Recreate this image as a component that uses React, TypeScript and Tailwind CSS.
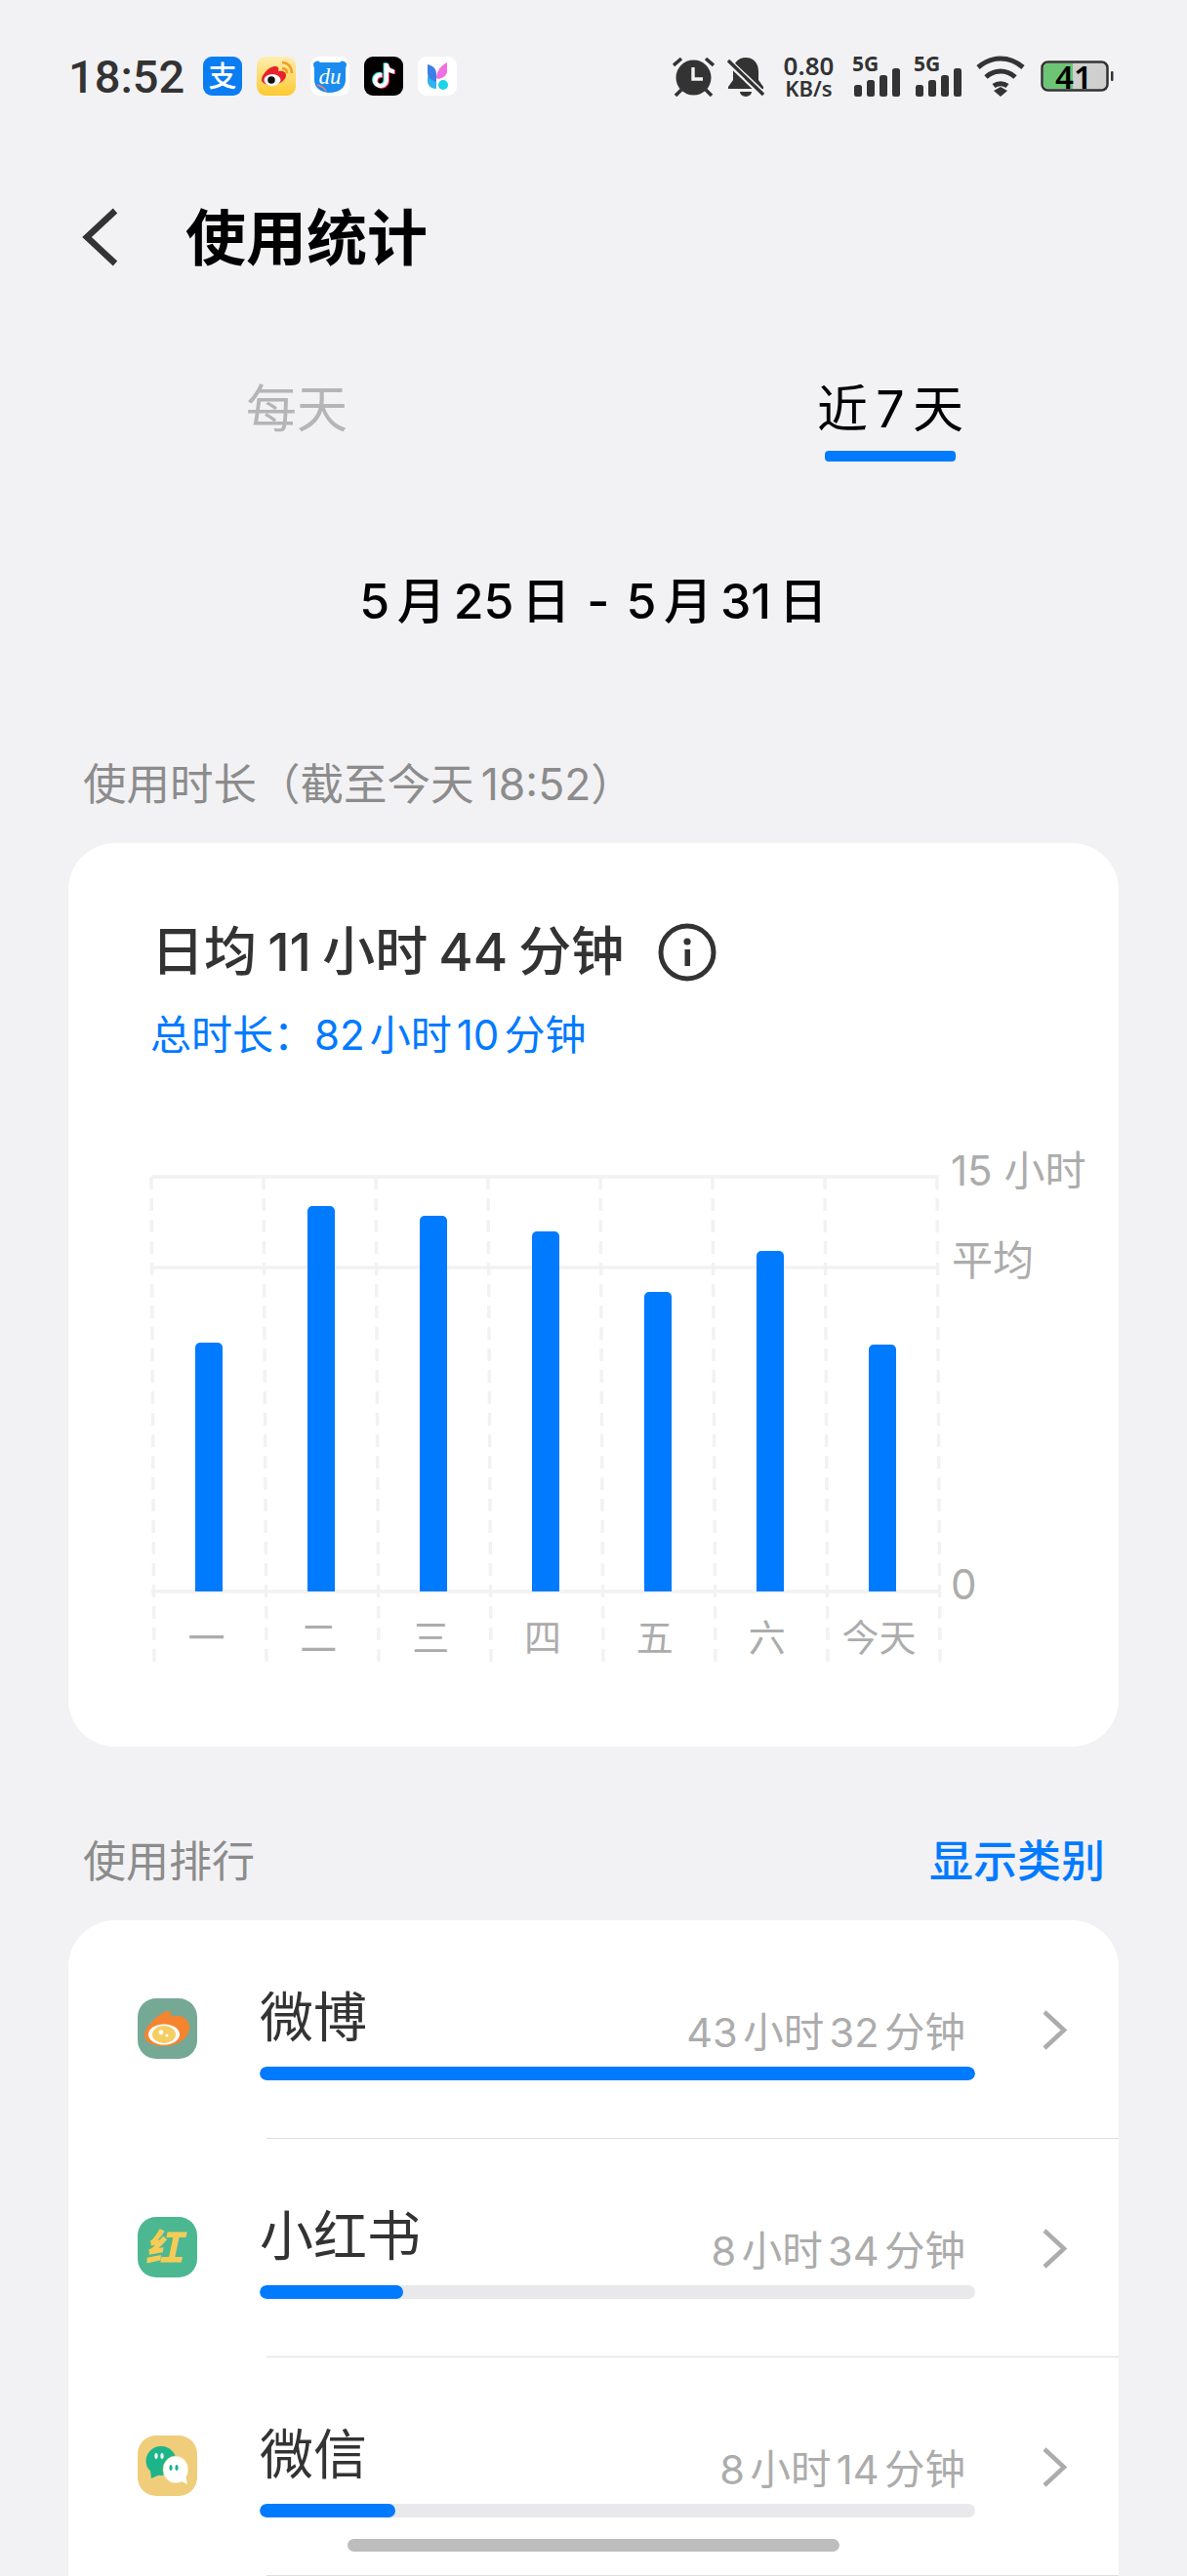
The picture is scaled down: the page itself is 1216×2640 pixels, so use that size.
import React from 'react';

const FONT = 'font-["Inter","Noto_Sans_CJK_SC",sans-serif]';

const BARS = [1376, 1236, 1246, 1262, 1324, 1282, 1378];
const DAYS = ['一', '二', '三', '四', '五', '六', '今天'];

const RANKS = [
  { name: '微博', time: '43 小时 32 分钟', fill: 733, icon: 'weibo' },
  { name: '小红书', time: '8 小时 34 分钟', fill: 147, icon: 'red' },
  { name: '微信', time: '8 小时 14 分钟', fill: 139, icon: 'wechat' },
];

const TIKTOK =
  'M12.525.02c1.31-.02 2.61-.01 3.91-.02.08 1.53.63 3.09 1.75 4.17 1.12 1.11 2.7 1.62 4.24 1.79v4.03c-1.44-.05-2.89-.35-4.2-.97-.57-.26-1.1-.59-1.62-.93-.01 2.92.01 5.84-.02 8.75-.08 1.4-.54 2.79-1.35 3.94-1.31 1.92-3.58 3.17-5.91 3.21-1.43.08-2.86-.31-4.08-1.03-2.02-1.19-3.44-3.37-3.65-5.71-.02-.5-.03-1-.01-1.49.18-1.9 1.12-3.72 2.58-4.96 1.66-1.44 3.98-2.13 6.15-1.72.02 1.48-.04 2.96-.04 4.44-.99-.32-2.15-.23-3.02.37-.63.41-1.11 1.04-1.36 1.75-.21.51-.15 1.07-.14 1.61.24 1.64 1.82 3.02 3.5 2.87 1.12-.01 2.19-.66 2.77-1.61.19-.33.4-.67.41-1.06.1-1.79.06-3.57.07-5.36.01-4.03-.01-8.05.02-12.07z';

const AppIcons = () => (
  <div className="ml-[20px] flex gap-[15px]">
    <div className="flex h-[40px] w-[40px] items-center justify-center rounded-[9px] bg-[#0a7df2] text-[29px] font-medium leading-none text-white">
      支
    </div>
    <svg width="40" height="40" viewBox="0 0 40 40">
      <defs>
        <linearGradient id="wb" x1="0" y1="0" x2="0" y2="1">
          <stop offset="0" stopColor="#fdeeb0" />
          <stop offset="1" stopColor="#fdc92e" />
        </linearGradient>
      </defs>
      <rect width="40" height="40" rx="9" fill="url(#wb)" />
      <path d="M5 24c0-6 8-14 14-14 3 0 4 2 3 5 5-1 8 1 8 4 0 6-8 10-14 10-6 0-11-2-11-5z" fill="#e8212b" />
      <ellipse cx="16" cy="24" rx="8.5" ry="6" fill="#fff" />
      <circle cx="15" cy="24" r="3.8" fill="#111" />
      <path d="M26 12c3 0 5 2 5 5M26 6c6 0 10 5 10 11" stroke="#f59a23" strokeWidth="2.4" fill="none" />
    </svg>
    <div className="relative flex h-[40px] w-[40px] items-center justify-center rounded-[9px] bg-white">
      <svg width="40" height="40" viewBox="0 0 40 40" className="absolute inset-0">
        <path d="M3 9a4 4 0 0 1 7-3h20a4 4 0 0 1 7 3l-1 3v12c0 8-7 13-16 13S4 32 4 24V12z" fill="#1a8cf0" />
        <path d="M7 29c4 1 7 3 9 6" stroke="#e9806e" strokeWidth="1.6" fill="none" />
      </svg>
      <span className='relative font-["Liberation_Serif",serif] text-[23px] italic leading-none text-white'>du</span>
    </div>
    <svg width="40" height="40" viewBox="0 0 40 40">
      <rect width="40" height="40" rx="9" fill="#000" />
      <g transform="translate(7.5 7) scale(1.05)">
        <path d={TIKTOK} fill="#25f4ee" transform="translate(-1 -.6)" />
        <path d={TIKTOK} fill="#fe2c55" transform="translate(1 .6)" />
        <path d={TIKTOK} fill="#fff" />
      </g>
    </svg>
    <svg width="40" height="40" viewBox="0 0 40 40">
      <rect width="40" height="40" rx="9" fill="#fff" />
      <path d="M10 8c5 1 9 4 9 10v8h-4c-3-2-5-5-5-9z" fill="#3d7fe6" />
      <path d="M10 20c2 3 6 5 9 6v7c-5 0-9-3-9-8z" fill="#2fb3ec" />
      <path d="M30 6v9c0 4-4 7-9 8l-2-1c0-7 5-13 11-16z" fill="#f06ee0" />
      <circle cx="26" cy="29" r="5" fill="#1dd3e6" />
    </svg>
  </div>
);

const Signal = () => (
  <div className="relative h-[41px] w-[49px]">
    <svg width="49" height="41" viewBox="0 0 49 41" className="absolute inset-0">
      <rect x="2" y="29" width="8" height="12" rx="2.5" fill="#333" />
      <rect x="15" y="24" width="8" height="17" rx="2.5" fill="#333" />
      <rect x="28" y="19" width="8" height="22" rx="2.5" fill="#333" />
      <rect x="41" y="12" width="8" height="29" rx="2.5" fill="#333" />
    </svg>
    <span className='absolute left-0 top-0 font-["Noto_Sans",sans-serif] text-[21px] font-bold leading-[15px] text-[#333]'>5G</span>
  </div>
);

const StatusRight = () => (
  <div className="ml-auto flex items-center">
    <svg width="43" height="41" viewBox="0 0 43 41">
      <circle cx="21.5" cy="21.5" r="18" fill="#333" />
      <path d="M21 11v12h10" stroke="#f2f2f5" strokeWidth="3.4" fill="none" />
      <path d="M1 9l8-7M42 9l-8-7M3 40l6-6M40 40l-6-6" stroke="#333" strokeWidth="3.6" />
    </svg>
    <svg className="ml-[13px]" width="38" height="41" viewBox="0 0 38 41">
      <path d="M19 1c8 0 13 6 13 14v9l5 7v2H1v-2l5-7v-9C6 7 11 1 19 1z" fill="#333" />
      <path d="M13 36a6 5 0 0 0 12 0z" fill="#333" />
      <path d="M0 4l37 35" stroke="#f2f2f5" strokeWidth="7" />
      <path d="M1 4l36 35" stroke="#333" strokeWidth="3.4" />
    </svg>
    <div className='ml-[19px] flex w-[53px] flex-col items-center font-["Noto_Sans",sans-serif] font-semibold text-[#333]'>
      <span className="text-[26px] leading-[23px]">0.80</span>
      <span className="text-[22px] leading-[22px]">KB/s</span>
    </div>
    <div className="ml-[18px]">
      <Signal />
    </div>
    <div className="ml-[14px]">
      <Signal />
    </div>
    <svg className="ml-[15px]" width="50" height="42" viewBox="0 0 50 42">
      <path d="M2 12c14-12 32-12 46 0M10 22c9-8 21-8 30 0M18 31c4-3 10-3 14 0" stroke="#333" strokeWidth="5" fill="none" />
      <path d="M18 36l7-4 7 4-7 6z" fill="#333" />
    </svg>
    <div className="relative ml-[16px] flex h-[32px] w-[75px] items-center justify-center">
      <svg width="75" height="32" viewBox="0 0 75 32" className="absolute inset-0">
        <rect x="1.5" y="1.5" width="67" height="29" rx="6" fill="#cfcfcf" stroke="#333" strokeWidth="2.5" />
        <path d="M3 8a5 5 0 0 1 5-5h25v26H8a5 5 0 0 1-5-5z" fill="#6cc574" />
        <rect x="72" y="11" width="2.5" height="10" rx="1" fill="#333" />
      </svg>
      <span className='relative mr-[7px] font-["Noto_Sans",sans-serif] text-[33px] font-semibold leading-none text-black'>41</span>
    </div>
  </div>
);

const Chart = () => (
  <div className="relative mt-[104px] h-[520px] w-full">
    <svg className="absolute left-0 top-0" width="830" height="520" viewBox="150 1190 830 520">
      {[155, 270, 385, 500, 615, 730, 845, 960].map((x) => (
        <line key={x} x1={x} y1="1206" x2={x + 3} y2="1706" stroke="#f2f2f4" strokeWidth="3.5" strokeDasharray="13 9" />
      ))}
      {[1206, 1299, 1631].map((y) => (
        <line key={y} x1="155" y1={y} x2="962" y2={y} stroke="#f2f2f4" strokeWidth="3.5" />
      ))}
      {BARS.map((top, i) => (
        <path
          key={i}
          d={`M${200 + i * 115} 1631V${top + 5}a5 5 0 0 1 5-5h18a5 5 0 0 1 5 5V1631z`}
          fill="#007aff"
        />
      ))}
    </svg>
    <div className="absolute left-[4px] top-[466px] grid w-[804px] grid-cols-7 text-center text-[38px] leading-[44px] text-[#acacac]">
      {DAYS.map((d) => (
        <span key={d}>{d}</span>
      ))}
    </div>
    <span className="absolute left-[824px] top-[-15px] whitespace-nowrap text-[42px] leading-[50px] text-[#acacac]">15 小时</span>
    <span className="absolute left-[825px] top-[77px] text-[42px] leading-[50px] text-[#acacac]">平均</span>
    <span className="absolute left-[824px] top-[409px] text-[42px] leading-[50px] text-[#acacac]">0</span>
  </div>
);

const RowIcon = ({ kind }: { kind: string }) => {
  if (kind === 'weibo') {
    return (
      <svg width="61" height="62" viewBox="0 0 61 62">
        <rect width="61" height="62" rx="19" fill="#76a995" />
        <path d="M7 38c0-9 13-21 23-25 3-1 5 1 4 6 8-3 15 0 18 6 5 11-8 24-24 24-12 0-21-4-21-11z" fill="#f6842f" />
        <ellipse cx="27" cy="37" rx="16" ry="10.5" fill="#fff" />
        <ellipse cx="27" cy="37" rx="12" ry="9" fill="#f6cd62" />
        <circle cx="24" cy="35" r="2.4" fill="#fff" />
        <circle cx="30" cy="38" r="1.5" fill="#fff" />
      </svg>
    );
  }
  if (kind === 'red') {
    return (
      <div className="flex h-[62px] w-[61px] items-center justify-center rounded-[19px] bg-[#4cb892] text-[38px] font-black leading-none text-[#f6cc55]">
        <span className="-skew-x-12">红</span>
      </div>
    );
  }
  return (
    <svg width="61" height="62" viewBox="0 0 61 62">
      <rect width="61" height="62" rx="19" fill="#efcd7a" />
      <ellipse cx="24" cy="26" rx="15.5" ry="15" fill="#1cb58a" />
      <path d="M13 36l1 8 9-4z" fill="#1cb58a" />
      <ellipse cx="39" cy="35" rx="13" ry="14" fill="#fff" stroke="#efcd7a" strokeWidth="0.6" />
      <path d="M43 46l8 4-2-9z" fill="#fff" />
      <ellipse cx="19" cy="21" rx="1.6" ry="3" fill="#fff" />
      <ellipse cx="25" cy="21" rx="1.6" ry="3" fill="#fff" />
      <ellipse cx="34" cy="33" rx="1.6" ry="3" fill="#1cb58a" />
      <ellipse cx="40" cy="33" rx="1.6" ry="3" fill="#1cb58a" />
    </svg>
  );
};

export default function App() {
  return (
    <div className={`relative h-[2640px] w-[1216px] overflow-hidden bg-[#f2f2f5] ${FONT}`}>
      <div className="flex h-[156px] items-center pl-[70px] pr-[75px]">
        <span className="w-[118px] font-['Roboto',sans-serif] text-[47px] font-medium leading-none text-[#333]">18:52</span>
        <AppIcons />
        <StatusRight />
      </div>

      <div className="flex h-[174px] items-center pl-[84px]">
        <svg width="38" height="60" viewBox="0 0 38 60">
          <path d="M34 3L5 30l29 27" stroke="#333" strokeWidth="6.5" fill="none" />
        </svg>
        <h1 className="ml-[68px] mt-[4px] text-[62px] font-semibold leading-none text-black">使用统计</h1>
      </div>

      <div className="grid grid-cols-2 pt-[61px] text-center text-[52px] leading-[58px] [word-spacing:-0.12em]">
        <span className="text-[#b5b5b5]">每天</span>
        <div className="flex flex-col items-center text-black">
          <span>近 7 天</span>
          <div className="mt-[13px] h-[11px] w-[134px] rounded-[4px] bg-[#007aff]" />
        </div>
      </div>

      <div className="mt-[113px] flex justify-center gap-[17px] text-[50px] font-medium leading-[60px] text-black [word-spacing:-0.11em]">
        <span>5 月 25 日</span>
        <span>-</span>
        <span>5 月 31 日</span>
      </div>

      <div className="mt-[128px] pl-[85px] text-[44.5px] leading-[60px] text-[#8c8c8c] [word-spacing:-0.12em]">使用时长（截至今天 18:52）</div>

      <section className="mx-[70px] mt-[30px] h-[926px] rounded-[48px] bg-white pl-[85px] pt-[80px]">
        <div className="flex items-center">
          <span className="text-[54px] font-medium leading-[64px] text-[#333] [word-spacing:-0.06em]">日均 11 小时 44 分钟</span>
          <svg className="ml-[34px]" width="62" height="62" viewBox="0 0 62 62">
            <circle cx="31" cy="31" r="27" stroke="#333" strokeWidth="5" fill="none" />
            <circle cx="31" cy="20" r="3.6" fill="#333" />
            <rect x="28.5" y="28" width="5.5" height="17" fill="#333" />
          </svg>
        </div>
        <div className="-ml-[1px] mt-[28px] text-[42px] leading-[50px] text-[#007aff] [word-spacing:-0.16em]">总时长：82 小时 10 分钟</div>
        <div className="-ml-[5px]">
          <Chart />
        </div>
      </section>

      <div className="mt-[88px] flex items-center justify-between pl-[85px] pr-[84px] leading-[60px]">
        <span className="text-[44px] text-[#8c8c8c]">使用排行</span>
        <span className="text-[45px] font-medium text-[#007aff]">显示类别</span>
      </div>

      <section className="mx-[70px] mt-[30px] rounded-t-[48px] bg-white">
        {RANKS.map((r) => (
          <div key={r.name}>
            <div className="flex h-[223px] items-start">
              <div className="ml-[71px] mt-[80px]">
                <RowIcon kind={r.icon} />
              </div>
              <div className="ml-[64px] mt-[68px] w-[733px]">
                <div className="flex h-[82px] justify-between pr-[10px]">
                  <span className="mt-[1px] text-[55px] leading-[60px] text-[#333]">{r.name}</span>
                  <span className="self-end text-[41.5px] leading-[70px] text-[#acacac] [word-spacing:-0.15em]">{r.time}</span>
                </div>
                <div className="h-[14px] overflow-hidden rounded-full bg-[#e9e9eb]">
                  <div className="h-full rounded-full bg-[#007aff]" style={{ width: r.fill }} />
                </div>
              </div>
              <svg className="ml-[68px] mt-[92px]" width="27" height="41" viewBox="0 0 27 41">
                <path d="M3 2l20 18.5L3 39" stroke="#acacac" strokeWidth="4.5" fill="none" />
              </svg>
            </div>
            <div className="ml-[203px] h-px bg-[#dedede]" />
          </div>
        ))}
      </section>

      <div className="absolute bottom-[25px] left-[356px] h-[13px] w-[504px] rounded-full bg-[#bdbdbd]" />
    </div>
  );
}
